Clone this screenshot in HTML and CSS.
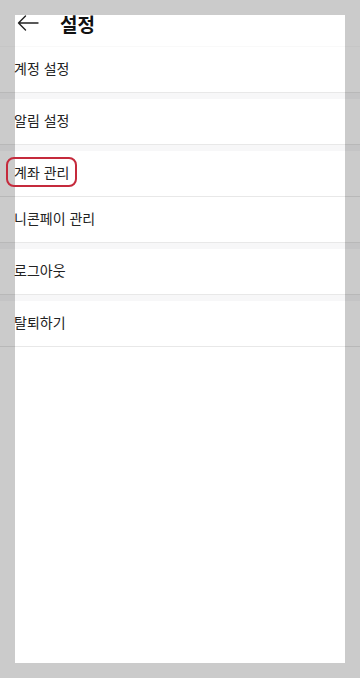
FILE: index.html
```html
<!DOCTYPE html>
<html lang="ko">
<head>
<meta charset="utf-8">
<link rel="stylesheet" href="styles.css">
</head>
<body>
<div class="frame">
  <div class="page">
    <header class="topbar">
      <svg class="back" width="22" height="16" viewBox="0 0 22 16" fill="none" stroke="#222" stroke-width="1.4" stroke-linecap="round" stroke-linejoin="round">
        <path d="M21 8H1.5M8.5 1L1.5 8l7 7"/>
      </svg>
      <h1 class="title">설정</h1>
    </header>
    <ul class="menu">
      <li class="row">계정 설정</li>
      <li class="gap"></li>
      <li class="row">알림 설정</li>
      <li class="gap"></li>
      <li class="row"><span class="mark">계좌 관리</span></li>
      <li class="row">니콘페이 관리</li>
      <li class="gap"></li>
      <li class="row">로그아웃</li>
      <li class="gap"></li>
      <li class="row">탈퇴하기</li>
    </ul>
  </div>
</div>
</body>
</html>
```

FILE: styles.css
```css
html, body {
  margin: 0;
  padding: 0;
}
body {
  background: #cbcbcb;
  width: 360px;
  height: 678px;
  overflow: hidden;
  font-family: "Noto Sans CJK KR", "Noto Sans", sans-serif;
  color: #222;
}
.frame {
  margin: 15px;
  height: 648px;
  background: #fff;
}
.page {
  margin: 0 -15px;
}
.topbar {
  display: flex;
  align-items: flex-start;
  height: 31px;
  border-bottom: 1px solid rgba(0, 0, 0, 0.025);
}
.back {
  margin-left: 17px;
}
.title {
  margin: -1px 0 0 21px;
  font-size: 19px;
  font-weight: 700;
  line-height: 1;
  color: #111;
}
.menu {
  list-style: none;
  margin: 0;
  padding: 0;
}
.row {
  display: flex;
  align-items: center;
  height: 42px;
  padding: 0 0 3px 14px;
  font-size: 14px;
  border-bottom: 1px solid rgba(0, 0, 0, 0.09);
  color: #222;
}
.gap {
  height: 6px;
  background: rgba(20, 30, 60, 0.035);
}
.mark {
  display: inline-block;
  margin-left: -8px;
  padding: 3px 6px;
  border: 2px solid #c52a3c;
  border-radius: 8px;
  line-height: 20px;
}
```
